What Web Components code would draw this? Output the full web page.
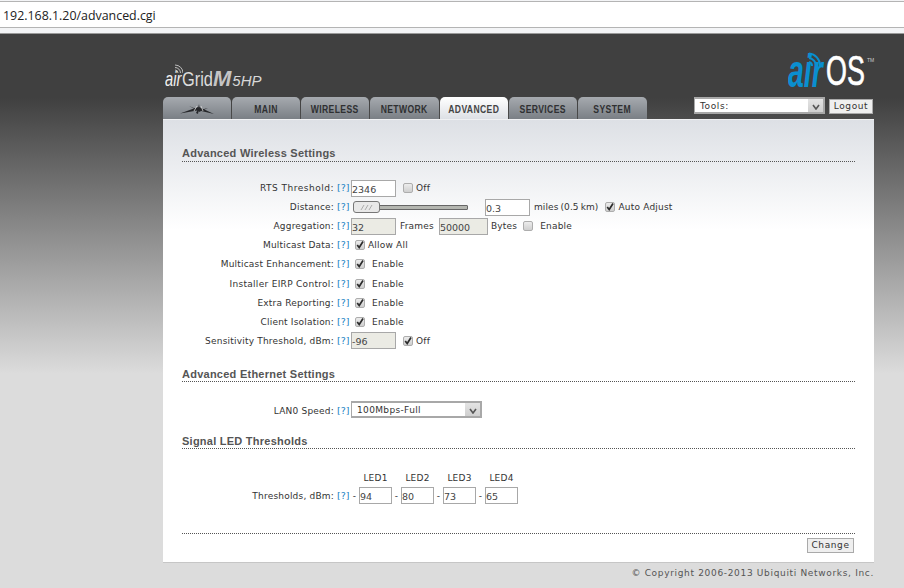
<!DOCTYPE html>
<html>
<head>
<meta charset="utf-8">
<title>airOS Advanced</title>
<style>
  html, body { margin: 0; padding: 0; height: 100%; overflow: hidden; }
  body { font-family: "DejaVu Sans", Verdana, sans-serif; font-size: 9px; color: #333; background: #dcdcdc; }
</style>
</head>
<body>
<url-bar>192.168.1.20/advanced.cgi</url-bar>
<air-page>
  <air-header slot="header"></air-header>
  <air-tabs slot="tabs"></air-tabs>

  <form-section title="Advanced Wireless Settings" style="--top:26px;--pt:17px;--pb:16px">
    <form-row label="RTS Threshold:" style="--ls:.5px;--lt:2px">
      <text-box value="2346"></text-box><check-box gap="7"></check-box><span>Off</span>
    </form-row>
    <form-row label="Distance:" style="--lt:2px">
      <range-slider></range-slider><text-box value="0.3" style="margin-left:17px"></text-box>
      <span style="margin-left:4px;letter-spacing:.1px;word-spacing:-1px">miles (0.5 km)</span><check-box checked gap="7"></check-box><span>Auto Adjust</span>
    </form-row>
    <form-row label="Aggregation:" style="--lt:2px">
      <text-box value="32" disabled></text-box><span style="margin-left:4px">Frames</span>
      <text-box value="50000" disabled width="49" style="margin-left:5px"></text-box>
      <span style="margin-left:3px">Bytes</span><check-box gap="6"></check-box><span style="margin-left:4px">Enable</span>
    </form-row>
    <form-row label="Multicast Data:" style="--lt:2px"><check-box checked gap="4"></check-box><span>Allow All</span></form-row>
    <form-row label="Multicast Enhancement:" style="--lt:2px"><check-box checked gap="4"></check-box><span style="margin-left:4px">Enable</span></form-row>
    <form-row label="Installer EIRP Control:" style="--ls:.3px"><check-box checked gap="4"></check-box><span style="margin-left:4px">Enable</span></form-row>
    <form-row label="Extra Reporting:"><check-box checked gap="4"></check-box><span style="margin-left:4px">Enable</span></form-row>
    <form-row label="Client Isolation:"><check-box checked gap="4"></check-box><span style="margin-left:4px">Enable</span></form-row>
    <form-row label="Sensitivity Threshold, dBm:">
      <text-box value="-96" disabled></text-box><check-box checked gap="7"></check-box><span>Off</span>
    </form-row>
  </form-section>

  <form-section title="Advanced Ethernet Settings" style="--pt:18px;--pb:14px;--hl:17px">
    <form-row label="LAN0 Speed:" style="--lt:-2px"><select-box value="100Mbps-Full" width="131"></select-box></form-row>
  </form-section>

  <form-section title="Signal LED Thresholds" style="--pt:17px;--pb:0;--hl:17px">
    <led-row></led-row>
  </form-section>

  <air-actions></air-actions>
  <air-footer slot="footer">© Copyright 2006-2013 Ubiquiti Networks, Inc.</air-footer>
</air-page>

<script>
const FONT = '"DejaVu Sans", Verdana, sans-serif';

class UrlBar extends HTMLElement {
    constructor() {
        super();
        this.attachShadow({ mode: 'open' });
        this.shadowRoot.innerHTML = `
            <style>
                :host { display: block; height: 34px; background: #f3f4f6; box-sizing: border-box; padding-top: 1px; border-bottom: 1px solid #9a9a9a; }
                .field {
                    height: 27px;
                    box-sizing: border-box;
                    background: #fff;
                    border-top: 1px solid #b4b4b4;
                    border-bottom: 1px solid #b4b4b4;
                    padding: 0 3px;
                    font: 12.4px/27px "Open Sans", "Noto Sans", sans-serif;
                    color: #222;
                    overflow: hidden;
                }
            </style>
            <div class="field"><slot></slot></div>
        `;
    }
}

class AirPage extends HTMLElement {
    constructor() {
        super();
        this.attachShadow({ mode: 'open' });
        this.shadowRoot.innerHTML = `
            <style>
                :host {
                    display: block;
                    height: 554px;
                    background: linear-gradient(#404040 0, #404040 64px, #dcdcdc 340px);
                }
                .wrap { width: 711px; margin-left: 163px; }
                .panel {
                    height: 443px;
                    box-sizing: border-box;
                    padding: 0 19px;
                    border-top: 1px solid #f0f1f3;
                    background: linear-gradient(#dde0e5 0, #ffffff 110px);
                    display: flex;
                    flex-direction: column;
                }
            </style>
            <div class="wrap">
                <slot name="header"></slot>
                <slot name="tabs"></slot>
                <div class="panel"><slot></slot></div>
                <slot name="footer"></slot>
            </div>
        `;
    }
}

class AirHeader extends HTMLElement {
    constructor() {
        super();
        this.attachShadow({ mode: 'open' });
        this.shadowRoot.innerHTML = `
            <style>
                :host { display: flex; height: 63px; box-sizing: border-box; align-items: flex-end; position: relative; padding-bottom: 5px; padding-left: 2px; }
                .product { display: flex; align-items: baseline; font: 21px/22px "Liberation Sans", Arial, sans-serif; color: #dcdcdc; position: relative; white-space: nowrap; }
                .air, .grid { display: inline-block; transform-origin: left bottom; }
                .air { font-style: italic; width: 17px; transform: scaleX(.7); color: #f0f0f0; }
                .grid { width: 31px; transform: scaleX(.78); }
                .m { font: italic bold 22px/22px "Liberation Sans", Arial, sans-serif; color: #c4c4c4; }
                .hp { font: italic 15px/22px "Liberation Sans", Arial, sans-serif; color: #d8d8d8; margin-left: 1px; }
                .waves { position: absolute; left: 9px; top: -4px; }
                .os { position: absolute; left: 621px; top: 14px; width: 90px; height: 46px; }
                .os span { position: absolute; white-space: nowrap; transform-origin: left bottom; }
                .os .a { left: 4px; bottom: 0; font: italic bold 46px/46px "Liberation Sans", Arial, sans-serif; color: #0a8fd0; transform: scaleX(.62); }
                .os .o { left: 42px; bottom: 0; font: 42px/46px "Liberation Sans", Arial, sans-serif; color: #fff; transform: scaleX(.64); -webkit-text-stroke: .7px #fff; }
                .os .tm { left: 83px; top: 9px; font: 5px/6px "Liberation Sans", Arial, sans-serif; color: #ccc; }
                .os svg { position: absolute; left: 24px; top: 4px; }
            </style>
            <div class="product">
                <svg class="waves" width="9" height="9" viewBox="0 0 9 9" fill="none" stroke="#bdbdbd" stroke-width="1"><path d="M1 6a3 3 0 0 1 3 3"/><path d="M1 3.500a5.500 5.500 0 0 1 5.500 5.500"/><path d="M1 1a8 8 0 0 1 8 8"/></svg>
                <span class="air">air</span><span class="grid">Grid</span><span class="m">M</span><span class="hp">5HP</span>
            </div>
            <div class="os">
                <svg width="13" height="15" viewBox="0 0 13 15" fill="none" stroke="#0a8fd0" stroke-width="2"><path d="M1 10a4 4 0 0 1 3 4"/><path d="M1 6a8 8 0 0 1 7 8"/><path d="M1 1.500a12 12 0 0 1 11 12"/></svg>
                <span class="a">air</span><span class="o">OS</span><span class="tm">TM</span>
            </div>
        `;
    }
}

class AirTabs extends HTMLElement {
    constructor() {
        super();
        this.attachShadow({ mode: 'open' });
        const tabs = [['', 68], ['MAIN', 68], ['WIRELESS', 68], ['NETWORK', 69], ['ADVANCED', 68], ['SERVICES', 68], ['SYSTEM', 69]];
        const dish = `<svg width="36" height="12" viewBox="0 0 36 12" fill="#26272a">
            <path d="M1 10.500 L19 4 L21 7 Z"/><path d="M35 11 L20 4 L18 7 Z"/>
            <path d="M10 3 L21 7.500 L19.500 8 Z"/><path d="M29 5 L19 7.500 L20 9 Z"/>
            <path d="M20 1 L18.500 8 L21 8 Z"/><path d="M17 10 L19 6 L20 6 L19 11 Z"/>
            <path d="M18 3 L15 8 M22 3 L24 8" stroke="#d8d8d8" stroke-width=".8" fill="none"/>
        </svg>`;
        const html = tabs.map(t => {
            const active = t[0] === 'ADVANCED' ? ' active' : '';
            const inner = t[0] ? `<span>${t[0]}</span>` : dish;
            return `<div class="tab${active}" style="width:${t[1]}px">${inner}</div>`;
        }).join('');
        this.shadowRoot.innerHTML = `
            <style>
                :host { display: flex; height: 22px; justify-content: space-between; align-items: stretch; }
                .tabs { display: flex; gap: 1px; }
                .tab {
                    height: 22px;
                    box-sizing: border-box;
                    padding-top: 2px;
                    border-radius: 5px 5px 0 0;
                    background: linear-gradient(#a6aaaf, #7a7f85);
                    display: flex; align-items: center; justify-content: center;
                    font: bold 11px/1 "Liberation Sans", Arial, sans-serif;
                    color: #2f3032;
                }
                .tab span { display: inline-block; transform: scaleX(.78); letter-spacing: .5px; }
                .tab.active { background: linear-gradient(#ffffff, #dde0e5); color: #444; }
                .tools { display: flex; gap: 4px; align-items: flex-start; margin-right: 1px; }
            </style>
            <div class="tabs">${html}</div>
            <div class="tools">
                <select-box value="Tools:" width="131" style="--ls:.6px"></select-box>
                <push-button style="margin-top:2px;width:44px">Logout</push-button>
            </div>
        `;
    }
}

class FormSection extends HTMLElement {
    constructor() {
        super();
        this.attachShadow({ mode: 'open' });
    }

    connectedCallback() {
        this.shadowRoot.innerHTML = `
            <style>
                :host { display: block; margin-top: var(--top, 0); }
                h2 {
                    margin: 0;
                    height: 15px;
                    font: bold 11px/var(--hl, 15px) "Liberation Sans", Arial, sans-serif;
                    letter-spacing: .25px;
                    color: #555;
                    border-bottom: 1px dotted #555;
                }
                .rows { padding: var(--pt) 0 var(--pb); display: flex; flex-direction: column; }
            </style>
            <h2>${this.getAttribute('title')}</h2>
            <div class="rows"><slot></slot></div>
        `;
    }
}

class FormRow extends HTMLElement {
    constructor() {
        super();
        this.attachShadow({ mode: 'open' });
    }

    connectedCallback() {
        this.shadowRoot.innerHTML = `
            <style>
                :host { display: flex; height: 19px; align-items: center; font: 9px/12px ${FONT}; letter-spacing: .2px; color: #333; }
                .label { width: 152px; text-align: right; white-space: nowrap; flex: none; letter-spacing: var(--ls, .2px); margin-bottom: var(--lt, 0); }
                .help { color: #1a83c4; width: 14px; margin-left: 3px; font-size: 9.5px; letter-spacing: 0; flex: none; margin-bottom: var(--lt, 0); }
                .value { display: flex; align-items: center; white-space: nowrap; }
                ::slotted(span), ::slotted(check-box) { margin-bottom: var(--lt, 0); }
            </style>
            <div class="label">${this.getAttribute('label')}</div>
            <span class="help">[?]</span>
            <div class="value"><slot></slot></div>
        `;
    }
}

class TextBox extends HTMLElement {
    constructor() {
        super();
        this.attachShadow({ mode: 'open' });
    }

    connectedCallback() {
        const width = this.getAttribute('width') || 45;
        const disabled = this.hasAttribute('disabled');
        this.shadowRoot.innerHTML = `
            <style>
                :host { display: inline-block; flex: none; }
                input {
                    display: block;
                    box-sizing: border-box;
                    width: ${width}px;
                    height: 17px;
                    padding: 1px 0 0 0;
                    border: 1px solid #a8a8a8;
                    background: ${disabled ? '#ebebe4' : '#fff'};
                    font: 9.5px "DejaVu Sans", Verdana, sans-serif;
                    color: #444;
                    outline: none;
                }
            </style>
            <input value="${this.getAttribute('value')}" ${disabled ? 'disabled' : ''}>
        `;
    }
}

class CheckBox extends HTMLElement {
    constructor() {
        super();
        this.attachShadow({ mode: 'open' });
    }

    connectedCallback() {
        const gap = this.getAttribute('gap') || 6;
        const checked = this.hasAttribute('checked');
        this.shadowRoot.innerHTML = `
            <style>
                :host { display: inline-flex; flex: none; width: 8px; height: 8px; margin-top: 0; margin-right: 3px; margin-left: ${gap}px; border: 1px solid #adadad; border-radius: 2px; background: linear-gradient(#ececec, #cfcfcf); align-items: center; justify-content: center; }
                svg { display: block; overflow: visible; }
            </style>
            ${checked ? '<svg width="8" height="8" viewBox="0 0 8 8"><path d="M1.200 4 L3.200 6.500 L7 0.500" fill="none" stroke="#2c2c2c" stroke-width="1.7"/></svg>' : ''}
        `;
    }
}

class RangeSlider extends HTMLElement {
    constructor() {
        super();
        this.attachShadow({ mode: 'open' });
        this.shadowRoot.innerHTML = `
            <style>
                :host { display: block; position: relative; width: 115px; height: 10px; margin-left: 2px; flex: none; }
                .track { position: absolute; left: 0; right: 0; top: 2px; height: 5px; box-sizing: border-box; background: #b4b6b0; border: 1px solid #666; border-radius: 1px; }
                .thumb {
                    position: absolute; left: 0; top: -2px; width: 27px; height: 12px; box-sizing: border-box;
                    background: #e8e8e8; border: 1px solid #777; border-radius: 3px;
                    display: flex; align-items: center; justify-content: center;
                }
            </style>
            <div class="track"></div>
            <div class="thumb"><svg width="13" height="6" viewBox="0 0 13 6" stroke="#aaa" fill="none"><path d="M1 6 L4 1 M5 6 L8 1 M9 6 L12 1"/></svg></div>
        `;
    }
}

class SelectBox extends HTMLElement {
    constructor() {
        super();
        this.attachShadow({ mode: 'open' });
    }

    connectedCallback() {
        const width = this.getAttribute('width') || 131;
        this.shadowRoot.innerHTML = `
            <style>
                :host { display: flex; flex: none; box-sizing: border-box; width: ${width}px; height: 17px; border: 2px solid #a8a8a8; border-left-width: 1px; background: #fff; font: 9px/15px ${FONT}; letter-spacing: var(--ls, .35px); color: #333; }
                .text { flex: 1; padding-left: 5px; }
                .arrow { width: 15px; background: linear-gradient(#e4e4e4, #cfcfcf); display: flex; align-items: center; justify-content: center; padding-top: 2px; box-sizing: border-box; }
            </style>
            <div class="text">${this.getAttribute('value')}</div>
            <div class="arrow"><svg width="8" height="6" viewBox="0 0 8 6"><path d="M1 1 L4 5 L7 1" fill="none" stroke="#555" stroke-width="1.6"/></svg></div>
        `;
    }
}

class PushButton extends HTMLElement {
    constructor() {
        super();
        this.attachShadow({ mode: 'open' });
        this.shadowRoot.innerHTML = `
            <style>
                :host { display: inline-flex; align-items: center; justify-content: center; box-sizing: border-box; width: 45px; height: 15px; border: 1px solid #aaa; background: #efefef; font: 9px/13px ${FONT}; letter-spacing: .6px; color: #333; flex: none; }
            </style>
            <slot></slot>
        `;
    }
}

class LedRow extends HTMLElement {
    constructor() {
        super();
        this.attachShadow({ mode: 'open' });
        const vals = ['94', '80', '73', '65'];
        const heads = vals.map((v, i) => `<span class="h">LED${i + 1}</span>`).join('');
        const boxes = vals.map(v => `<span class="dash">-</span><text-box value="${v}" width="33"></text-box>`).join('');
        this.shadowRoot.innerHTML = `
            <style>
                :host { display: block; padding-top: 6px; font: 9px/12px ${FONT}; letter-spacing: .2px; color: #333; }
                .heads { display: flex; gap: 9px; padding-left: 177px; height: 15px; }
                .h { width: 33px; text-align: center; }
                .row { display: flex; align-items: center; height: 17px; }
                .label { width: 152px; text-align: right; white-space: nowrap; flex: none; }
                .help { color: #1a83c4; width: 14px; margin-left: 3px; font-size: 9.5px; letter-spacing: 0; flex: none; margin-right: -1px; }
                .dash { width: 9px; text-align: center; flex: none; }
            </style>
            <div class="heads">${heads}</div>
            <div class="row">
                <div class="label">Thresholds, dBm:</div><span class="help">[?]</span>${boxes}
            </div>
        `;
    }
}

class AirActions extends HTMLElement {
    constructor() {
        super();
        this.attachShadow({ mode: 'open' });
        this.shadowRoot.innerHTML = `
            <style>
                :host { display: flex; justify-content: flex-end; margin-top: auto; height: 29px; box-sizing: border-box; border-top: 1px dotted #555; padding: 4px 1px 0 0; }
            </style>
            <push-button style="width:47px">Change</push-button>
        `;
    }
}

class AirFooter extends HTMLElement {
    constructor() {
        super();
        this.attachShadow({ mode: 'open' });
        this.shadowRoot.innerHTML = `
            <style>
                :host { display: block; text-align: right; border-top: 1px solid #c6c6c6; font: 9px/21px ${FONT}; letter-spacing: .67px; color: #555; white-space: nowrap; }
            </style>
            <slot></slot>
        `;
    }
}

customElements.define('url-bar', UrlBar);
customElements.define('air-page', AirPage);
customElements.define('air-header', AirHeader);
customElements.define('air-tabs', AirTabs);
customElements.define('form-section', FormSection);
customElements.define('form-row', FormRow);
customElements.define('text-box', TextBox);
customElements.define('check-box', CheckBox);
customElements.define('range-slider', RangeSlider);
customElements.define('select-box', SelectBox);
customElements.define('push-button', PushButton);
customElements.define('led-row', LedRow);
customElements.define('air-actions', AirActions);
customElements.define('air-footer', AirFooter);
</script>
</body>
</html>
